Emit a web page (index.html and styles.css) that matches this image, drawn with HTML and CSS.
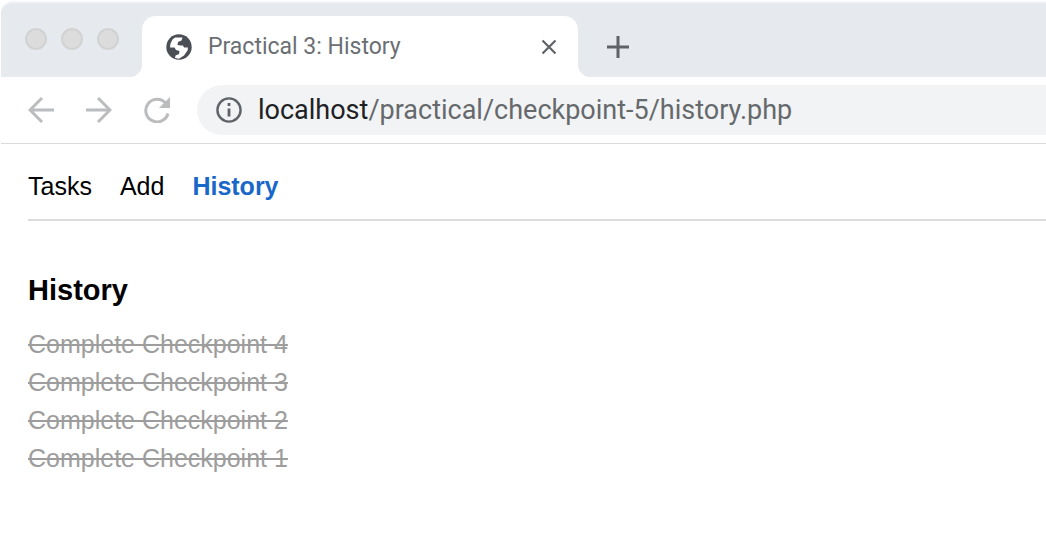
FILE: index.html
```
<!DOCTYPE html>
<html lang="en">
<head>
<meta charset="utf-8">
<title>Practical 3: History</title>
<link rel="stylesheet" href="styles.css">
</head>
<body>
<div class="browser">
  <header class="tab-strip">
    <div class="window-controls">
      <span class="light"></span><span class="light"></span><span class="light"></span>
    </div>
    <div class="tab">
      <svg class="globe" viewBox="0 0 26 26" aria-hidden="true">
        <circle cx="13" cy="13" r="12.7" fill="#4b4e55"/>
        <path d="M9 3.500h7.500l-1 3-3.500 1.500-.5 3 3 .5h2.500l1 2h4l-.5 3-3.500 5-5 3.200-4-.7.5-2.500 3.500-1.500.5-3-3.500-1-1.500-2.500H4l.5-4L6.500 5.500z" fill="#fff"/>
      </svg>
      <span class="tab-title">Practical 3: History</span>
      <button class="tab-close" aria-label="Close tab">
        <svg viewBox="0 0 16 16"><path d="M1.500 1.500l13 13M14.500 1.500l-13 13" stroke="#5f6368" stroke-width="2.200"/></svg>
      </button>
    </div>
    <button class="new-tab" aria-label="New tab">
      <svg viewBox="0 0 22 22"><path d="M11 0v22M0 11h22" stroke="#5f6368" stroke-width="3"/></svg>
    </button>
  </header>
  <div class="toolbar">
    <button class="tool" aria-label="Back">
      <svg viewBox="0 0 26 26"><path d="M26 13H2M14 1L2 13l12 12" fill="none" stroke="#babcbe" stroke-width="3"/></svg>
    </button>
    <button class="tool" aria-label="Forward">
      <svg viewBox="0 0 26 26"><path d="M0 13h24M12 1l12 12-12 12" fill="none" stroke="#babcbe" stroke-width="3"/></svg>
    </button>
    <button class="tool" aria-label="Reload">
      <svg viewBox="0 0 26 26"><path d="M21.500 6A11.300 11.300 0 1 0 24 16.500" fill="none" stroke="#babcbe" stroke-width="3"/><path d="M26 0v11H15z" fill="#babcbe"/></svg>
    </button>
    <div class="address">
      <svg class="info" viewBox="0 0 26 26" aria-hidden="true"><circle cx="13" cy="13" r="11.600" fill="none" stroke="#5f6368" stroke-width="2.400"/><path d="M13 11.500v8M13 6v3" stroke="#5f6368" stroke-width="2.800"/></svg>
      <span class="url"><span class="host">localhost</span>/practical/checkpoint-5/history.php</span>
    </div>
  </div>
</div>
<main class="page">
  <nav class="nav">
    <a href="#tasks">Tasks</a>
    <a href="#add">Add</a>
    <a class="current" href="#history" aria-current="page">History</a>
  </nav>
  <h1 class="heading">History</h1>
  <ul class="tasks">
    <li>Complete Checkpoint 4</li>
    <li>Complete Checkpoint 3</li>
    <li>Complete Checkpoint 2</li>
    <li>Complete Checkpoint 1</li>
  </ul>
</main>
</body>
</html>
```
FILE: styles.css
```
* { box-sizing: border-box; }
body {
  margin: 0;
  padding: 1px 0 0 1px;
  background: #fff;
  color: #000;
  font-family: "Liberation Sans", Arial, sans-serif;
  font-size: 25px;
}
button { border: 0; padding: 0; background: none; }
svg { display: block; }
.browser { font-family: Roboto, sans-serif; }
.tab-strip {
  display: flex;
  height: 76px;
  padding: 13px 0 0 24px;
  border-top: 2px solid #f3f4f6;
  border-top-left-radius: 12px;
  background: #e6e9ee;
}
.window-controls { display: flex; gap: 14px; padding-top: 12px; }
.light {
  width: 22px;
  height: 22px;
  border: 2px solid #d2d2d2;
  border-radius: 50%;
  background: #dcdcdc;
}
.tab {
  position: relative;
  display: flex;
  align-items: center;
  flex: 0 1 436px;
  margin-left: 23px;
  padding: 0 21px 0 24px;
  border-radius: 14px 14px 0 0;
  background: #fff;
}
.tab::before, .tab::after {
  content: "";
  position: absolute;
  bottom: 0;
  width: 12px;
  height: 12px;
}
.tab::before { right: 100%; background: radial-gradient(circle at 0 0, #e6e9ee 12px, #fff 12px); }
.tab::after { left: 100%; background: radial-gradient(circle at 100% 0, #e6e9ee 12px, #fff 12px); }
.globe { width: 26px; height: 26px; }
.tab-title { flex: 1; margin-left: 16px; color: #6b6f73; font-size: 23px; white-space: nowrap; }
.tab-close { width: 16px; height: 16px; }
.new-tab { width: 22px; margin-left: 29px; }
.toolbar {
  display: flex;
  align-items: center;
  gap: 32px;
  padding: 8px 0 8px 27px;
  border-bottom: 1px solid #dadada;
}
.tool { flex: none; width: 26px; height: 26px; }
.address {
  display: flex;
  flex: 1;
  align-items: center;
  gap: 16px;
  height: 50px;
  margin-left: -5px;
  padding-left: 19px;
  border-radius: 25px 0 0 25px;
  background: #f1f3f4;
}
.info { width: 26px; height: 26px; }
.url { color: #66696c; font-size: 27px; white-space: nowrap; }
.host { color: #202124; }
.page { padding: 23px 0 0 27px; }
.nav {
  display: flex;
  gap: 28px;
  padding-bottom: 14px;
  border-bottom: 2px solid #dcdcdc;
  line-height: 38px;
}
.nav a { color: #000; text-decoration: none; }
.nav .current { color: #1967c8; font-weight: bold; }
.heading { margin: 49px 0 15px; font-size: 29px; line-height: 40px; }
.tasks {
  margin: 0;
  padding: 0;
  list-style: none;
  color: #9d9d9d;
  line-height: 38px;
  text-decoration: line-through;
  text-decoration-thickness: 2px;
}
```
